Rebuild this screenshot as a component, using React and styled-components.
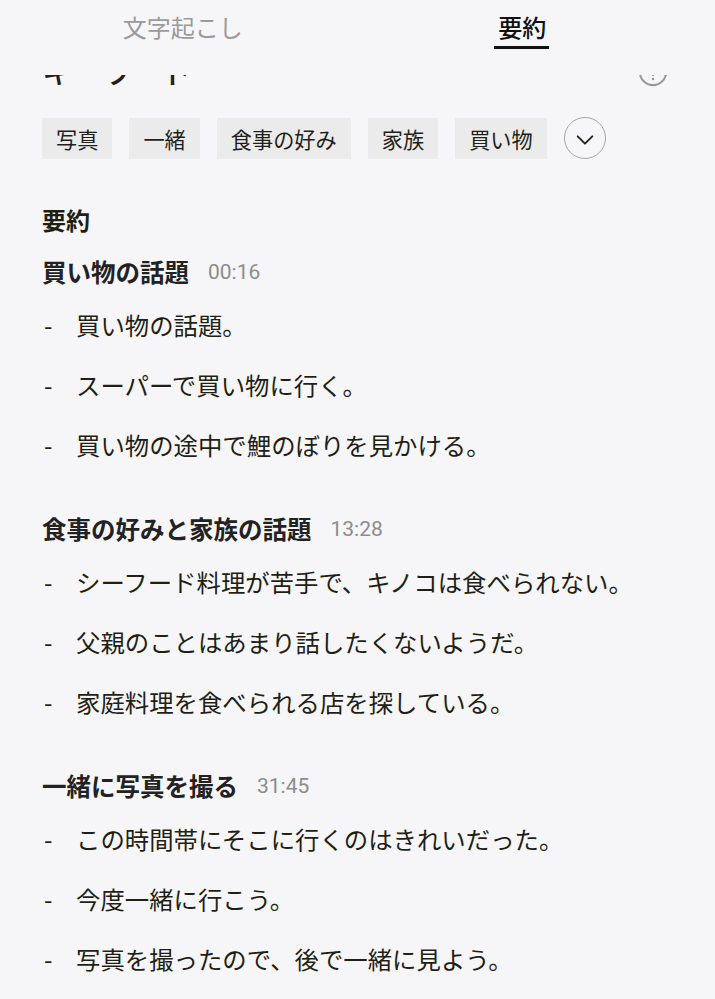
import React from 'react';
import styled, { createGlobalStyle } from 'styled-components';

const GlobalStyle = createGlobalStyle`
	body {
		margin: 0;
		background: #f6f6f8;
		font-family: 'Noto Sans CJK JP', 'Noto Sans', sans-serif;
		color: #1f1f1b;
	}
`;

const keywords = ['写真', '一緒', '食事の好み', '家族', '買い物'];

const sections = [
	{
		title: '買い物の話題',
		time: '00:16',
		points: ['買い物の話題。', 'スーパーで買い物に行く。', '買い物の途中で鯉のぼりを見かける。'],
	},
	{
		title: '食事の好みと家族の話題',
		time: '13:28',
		points: [
			'シーフード料理が苦手で、キノコは食べられない。',
			'父親のことはあまり話したくないようだ。',
			'家庭料理を食べられる店を探している。',
		],
	},
	{
		title: '一緒に写真を撮る',
		time: '31:45',
		points: ['この時間帯にそこに行くのはきれいだった。', '今度一緒に行こう。', '写真を撮ったので、後で一緒に見よう。'],
	},
];

const App = () => {
	return (
		<Page>
			<GlobalStyle />
			<TabBar>
				<Tab>文字起こし</Tab>
				<Tab active>要約</Tab>
			</TabBar>
			<Content>
				<KeywordHeader>
					<h2>キーワード</h2>
					<HelpIcon viewBox="0 0 32 32">
						<circle cx="16" cy="16" r="14" fill="none" stroke="#999" strokeWidth="2.2" />
						<path d="M12 12.5a4 4 0 1 1 5.5 3.7c-1 .5-1.5 1.2-1.5 2.3v1" fill="none" stroke="#999" strokeWidth="2" strokeLinecap="round" />
						<circle cx="16" cy="23.5" r="1.3" fill="#999" />
					</HelpIcon>
				</KeywordHeader>
				<ChipRow>
					{keywords.map((k) => (
						<Chip key={k}>{k}</Chip>
					))}
					<MoreButton>
						<svg width="22" height="22" viewBox="0 0 24 24" fill="none" stroke="#1f1f1b" strokeWidth="2" strokeLinecap="round" strokeLinejoin="round">
							<polyline points="4 8 12 16 20 8" />
						</svg>
					</MoreButton>
				</ChipRow>
				<SummaryLabel>要約</SummaryLabel>
				{sections.map((s, i) => (
					<Section key={s.title} first={i === 0}>
						<SectionHead>
							<span>{s.title}</span>
							<Time>{s.time}</Time>
						</SectionHead>
						<List>
							{s.points.map((p) => (
								<Item key={p}>
									<Dash>-</Dash>
									<span>{p}</span>
								</Item>
							))}
						</List>
					</Section>
				))}
			</Content>
		</Page>
	);
};

export default App;

const Page = styled.div`
	width: 715px;
	height: 999px;
	overflow: hidden;
	background: #f6f6f8;
`;

const TabBar = styled.div`
	position: relative;
	z-index: 2;
	height: 75px;
	display: flex;
	padding: 0 23px 0 13px;
	background: #f6f6f8;
`;

const Tab = styled.div`
	flex: 1;
	display: flex;
	justify-content: center;
	align-items: flex-start;
	padding-top: 9px;
	font-size: 24px;
	line-height: 36px;
	color: ${(p) => (p.active ? '#111' : '#9a9a9a')};
	font-weight: ${(p) => (p.active ? 500 : 400)};
	position: relative;

	&::after {
		content: '';
		display: ${(p) => (p.active ? 'block' : 'none')};
		position: absolute;
		top: 46px;
		left: 50%;
		width: 55px;
		height: 3px;
		margin-left: -28px;
		background: #111;
	}
`;

const Content = styled.div`
	padding: 0 42px;
`;

const KeywordHeader = styled.div`
	margin-top: -25px;
	height: 40px;
	display: flex;
	align-items: center;
	justify-content: space-between;

	h2 {
		margin: 0;
		font-size: 30px;
		font-weight: 500;
		line-height: 40px;
	}
`;

const HelpIcon = styled.svg`
	width: 30px;
	height: 30px;
	margin-right: 5px;
	margin-top: 3px;
`;

const ChipRow = styled.div`
	margin-top: 27px;
	display: flex;
	align-items: center;
	gap: 17px;
`;

const Chip = styled.div`
	height: 41px;
	padding: 0 14px;
	display: flex;
	align-items: center;
	background: #ebebeb;
	font-size: 21.2px;
	color: #1f1f1b;
`;

const MoreButton = styled.div`
	width: 42px;
	height: 42px;
	border: 1px solid #a6a6a6;
	border-radius: 50%;
	display: flex;
	align-items: center;
	justify-content: center;
	padding-top: 3px;
	box-sizing: border-box;
`;

const SummaryLabel = styled.div`
	margin-top: 44px;
	font-size: 24px;
	line-height: 34px;
	font-weight: 700;
	color: #1f1f12;
`;

const Section = styled.div`
	margin-top: ${(p) => (p.first ? '18px' : '38px')};
`;

const SectionHead = styled.div`
	display: flex;
	align-items: center;
	gap: 19px;
	font-size: 24.5px;
	line-height: 34px;
	font-weight: 700;
	color: #222;
`;

const Time = styled.span`
	font-family: Roboto, 'Noto Sans', sans-serif;
	font-weight: 400;
	font-size: 21px;
	color: #8c8c8c;
`;

const List = styled.div`
	margin-top: 5px;
`;

const Item = styled.div`
	display: grid;
	grid-template-columns: 34px 1fr;
	height: 60px;
	align-items: center;
	font-size: 24.4px;
	color: #1f1f14;
`;

const Dash = styled.span`
	padding-left: 2px;
`;
